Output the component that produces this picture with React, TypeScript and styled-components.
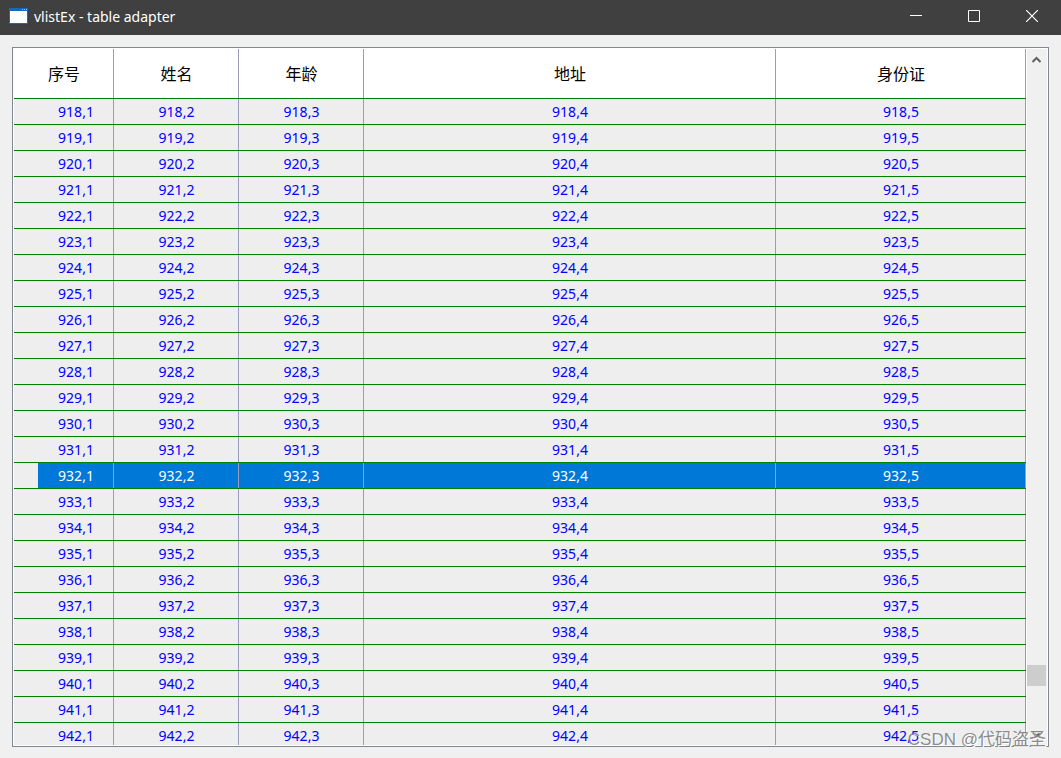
import React from "react";
import styled, { createGlobalStyle } from "styled-components";

const GlobalStyle = createGlobalStyle`
  *, *::before, *::after { box-sizing: border-box; }
  body {
    margin: 0;
    background: #f0f0f0;
    font-family: "Noto Sans", "Noto Sans CJK SC", sans-serif;
    font-size: 14px;
  }
`;

const Window = styled.div`
  display: flex;
  flex-direction: column;
  height: 100vh;
  overflow: hidden;
`;

const TitleBar = styled.header`
  display: flex;
  flex: none;
  align-items: center;
  height: 35px;
  padding-left: 8px;
  background: #404040;
  color: #fff;
`;

const Title = styled.h1`
  flex: 1;
  margin: 0 0 2px 5px;
  font-size: 14px;
  font-weight: 400;
  line-height: 20px;
`;

const AppIcon = styled.svg`
  display: block;
  flex: none;
  margin-bottom: 3px;
`;

const CaptionButton = styled.button`
  display: grid;
  place-items: center;
  width: 58px;
  height: 32px;
  margin-bottom: 3px;
  padding: 0;
  border: 0;
  background: transparent;
  color: #fff;
`;

const Client = styled.main`
  position: relative;
  display: flex;
  flex: 1;
  min-height: 0;
  padding: 12px 12px 11px;
`;

const ListFrame = styled.div`
  display: flex;
  flex: 1;
  min-width: 0;
  gap: 1px;
  padding: 1px;
  border: 1px solid #828790;
  background: #fff;
`;

const Viewport = styled.div`
  flex: 1;
  min-width: 0;
  overflow: hidden;
`;

const Table = styled.table`
  width: 100%;
  table-layout: fixed;
  border-spacing: 0;
  text-align: center;
`;

const Column = styled.col<{ $width?: number }>`
  width: ${({ $width }) => ($width ? `${$width}px` : "auto")};
`;

const HeaderCell = styled.th`
  height: 50px;
  padding: 0;
  background: #fff;
  box-shadow: inset 0 -1px #008000, inset -1px 0 #9b9bbb;
  color: #000;
  font-size: 16px;
  font-weight: 400;
  line-height: 24px;
`;

const Cell = styled.td<{ $selected: boolean; $indent: boolean }>`
  height: 26px;
  padding: 0 0 0 ${({ $indent }) => ($indent ? 24 : 0)}px;
  background: ${({ $selected, $indent }) =>
    !$selected ? "#eeeeee" : $indent ? "linear-gradient(90deg, #eeeeee 24px, #0078d7 24px)" : "#0078d7"};
  box-shadow: inset 0 -1px #008000, inset -1px 0 #9b9bbb;
  color: ${({ $selected }) => ($selected ? "#fff" : "#0000ff")};
  line-height: 20px;
`;

const ScrollBar = styled.div`
  display: flex;
  flex: none;
  flex-direction: column;
  width: 20px;
  padding-right: 1px;
  background: #f0f0f0;
`;

const ScrollButton = styled.button`
  display: grid;
  flex: none;
  place-items: center;
  height: 21px;
  padding: 0;
  border: 0;
  background: transparent;
  color: #606060;
`;

const Track = styled.div`
  display: flex;
  flex: 1;
  flex-direction: column;
`;

const Before = styled.div`
  flex: 595;
`;

const Thumb = styled.div`
  flex: none;
  height: 21px;
  background: #cdcdcd;
`;

const After = styled.div`
  flex: 38;
`;

const Watermark = styled.span`
  position: absolute;
  right: 15px;
  bottom: 6px;
  color: rgba(110, 110, 110, 0.8);
  font-family: "Liberation Sans", "Noto Sans CJK SC", sans-serif;
  font-size: 17px;
  line-height: 24px;
  text-shadow: 1px 1px #fff;
  pointer-events: none;
`;

const columns = [
  { name: "序号", width: 100 },
  { name: "姓名", width: 125 },
  { name: "年龄", width: 125 },
  { name: "地址" },
  { name: "身份证", width: 250 },
];
const rows = Array.from({ length: 25 }, (_, i) => 918 + i);
const selectedRow = 932;

export default function App() {
  return (
    <Window>
      <GlobalStyle />
      <TitleBar>
        <AppIcon width="21" height="17" viewBox="0 0 21 17">
          <rect x="2" y="1" width="19" height="16" fill="#263b60" opacity=".5" />
          <rect x="1" width="19" height="16" fill="#1769bd" />
          <rect x="2" y="3" width="17" height="12" fill="#fff" />
          <path d="M14 1.5h1M16 1.5h1M18 1.5h1" stroke="#8cc8f5" />
        </AppIcon>
        <Title>vlistEx - table adapter</Title>
        <CaptionButton aria-label="Minimize">
          <svg width="12" height="12"><path d="M0 5.5h12" stroke="currentColor" /></svg>
        </CaptionButton>
        <CaptionButton aria-label="Maximize">
          <svg width="12" height="12"><path d="M.5.5h11v11H.5z" fill="none" stroke="currentColor" /></svg>
        </CaptionButton>
        <CaptionButton aria-label="Close">
          <svg width="12" height="12"><path d="M0 0l12 12M12 0L0 12" stroke="currentColor" strokeWidth="1.2" /></svg>
        </CaptionButton>
      </TitleBar>
      <Client>
        <ListFrame>
          <Viewport>
            <Table>
              <colgroup>
                {columns.map((c) => <Column key={c.name} $width={c.width} />)}
              </colgroup>
              <thead>
                <tr>{columns.map((c) => <HeaderCell key={c.name} scope="col">{c.name}</HeaderCell>)}</tr>
              </thead>
              <tbody>
                {rows.map((row) => (
                  <tr key={row} aria-selected={row === selectedRow}>
                    {columns.map((c, i) => (
                      <Cell key={c.name} $selected={row === selectedRow} $indent={i === 0}>
                        {row},{i + 1}
                      </Cell>
                    ))}
                  </tr>
                ))}
              </tbody>
            </Table>
          </Viewport>
          <ScrollBar>
            <ScrollButton aria-label="Scroll up">
              <svg width="9" height="7"><path d="M.5 6l4-4 4 4" fill="none" stroke="currentColor" strokeWidth="2" /></svg>
            </ScrollButton>
            <Track><Before /><Thumb /><After /></Track>
            <ScrollButton aria-label="Scroll down">
              <svg width="9" height="7"><path d="M.5 1l4 4 4-4" fill="none" stroke="currentColor" strokeWidth="2" /></svg>
            </ScrollButton>
          </ScrollBar>
        </ListFrame>
        <Watermark>CSDN @代码盗圣</Watermark>
      </Client>
    </Window>
  );
}
